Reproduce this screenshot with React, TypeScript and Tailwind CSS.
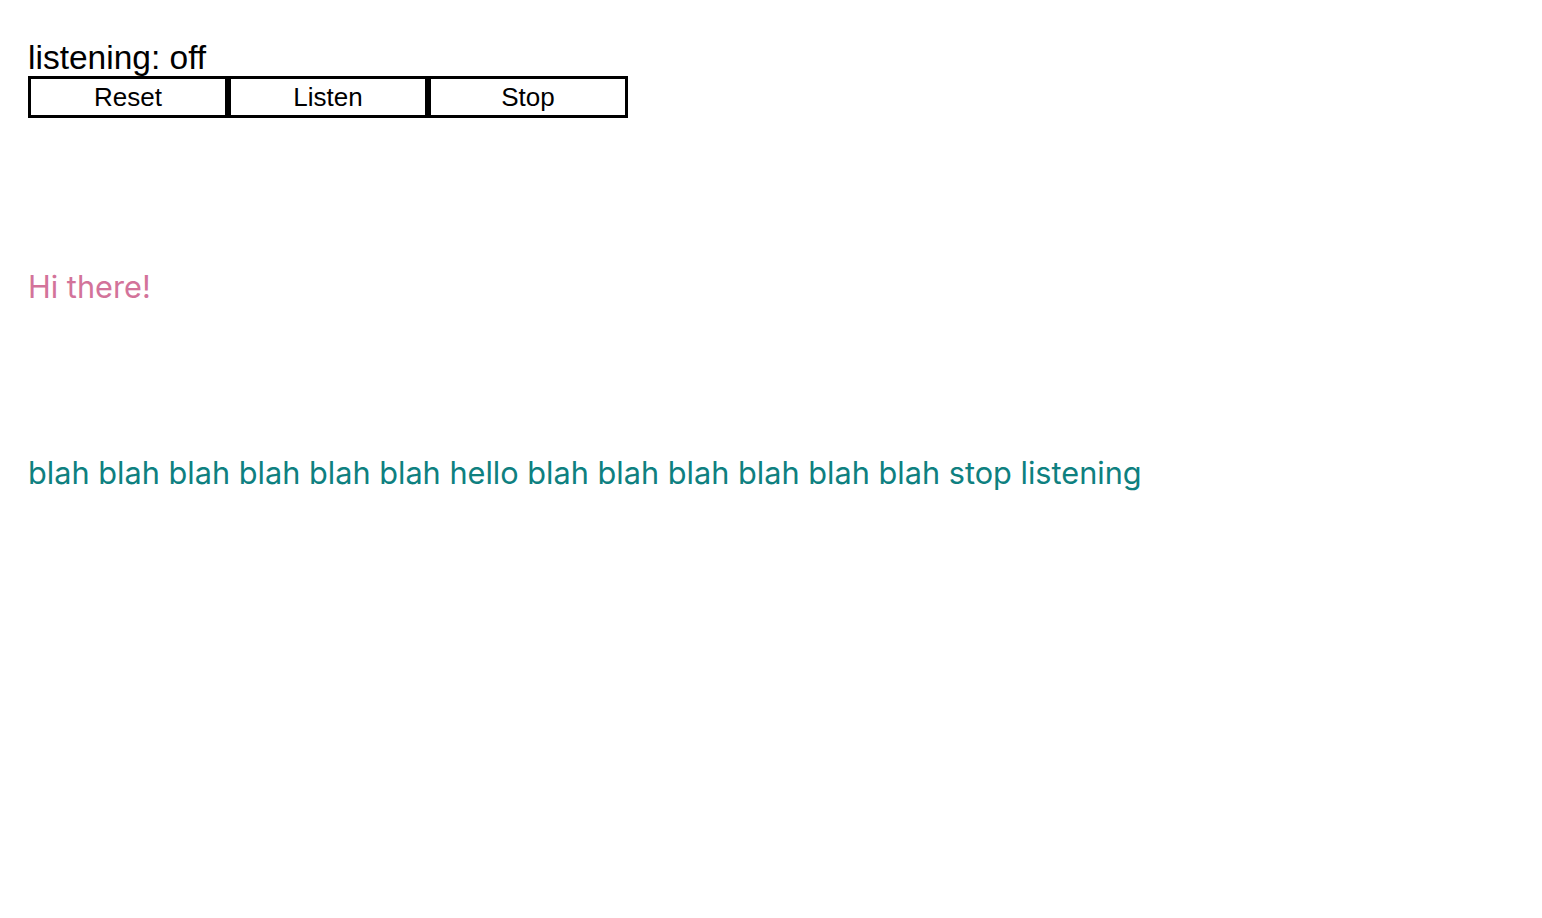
import React from 'react';

export default function App() {
  return (
    <div className="min-h-screen bg-white px-[28px] pt-[40px] font-['Liberation_Sans',Arial,sans-serif]">
      <div className="text-[33.5px] leading-[36px] text-black">listening: off</div>
      <div className="flex w-[600px]">
        <button className="h-[42px] w-[200px] border-[3px] border-black bg-white text-[26px] leading-none text-black">Reset</button>
        <button className="h-[42px] w-[200px] border-[3px] border-black bg-white text-[26px] leading-none text-black">Listen</button>
        <button className="h-[42px] w-[200px] border-[3px] border-black bg-white text-[26px] leading-none text-black">Stop</button>
      </div>
      <p className="mt-[150px] font-['Inter',sans-serif] text-[30.7px] leading-[38px] text-[#d3739a]">Hi there!</p>
      <p className="mt-[148px] font-['Inter',sans-serif] text-[30.7px] leading-[38px] text-[#0e8080]">
        blah blah blah blah blah blah hello blah blah blah blah blah blah stop listening
      </p>
    </div>
  );
}
